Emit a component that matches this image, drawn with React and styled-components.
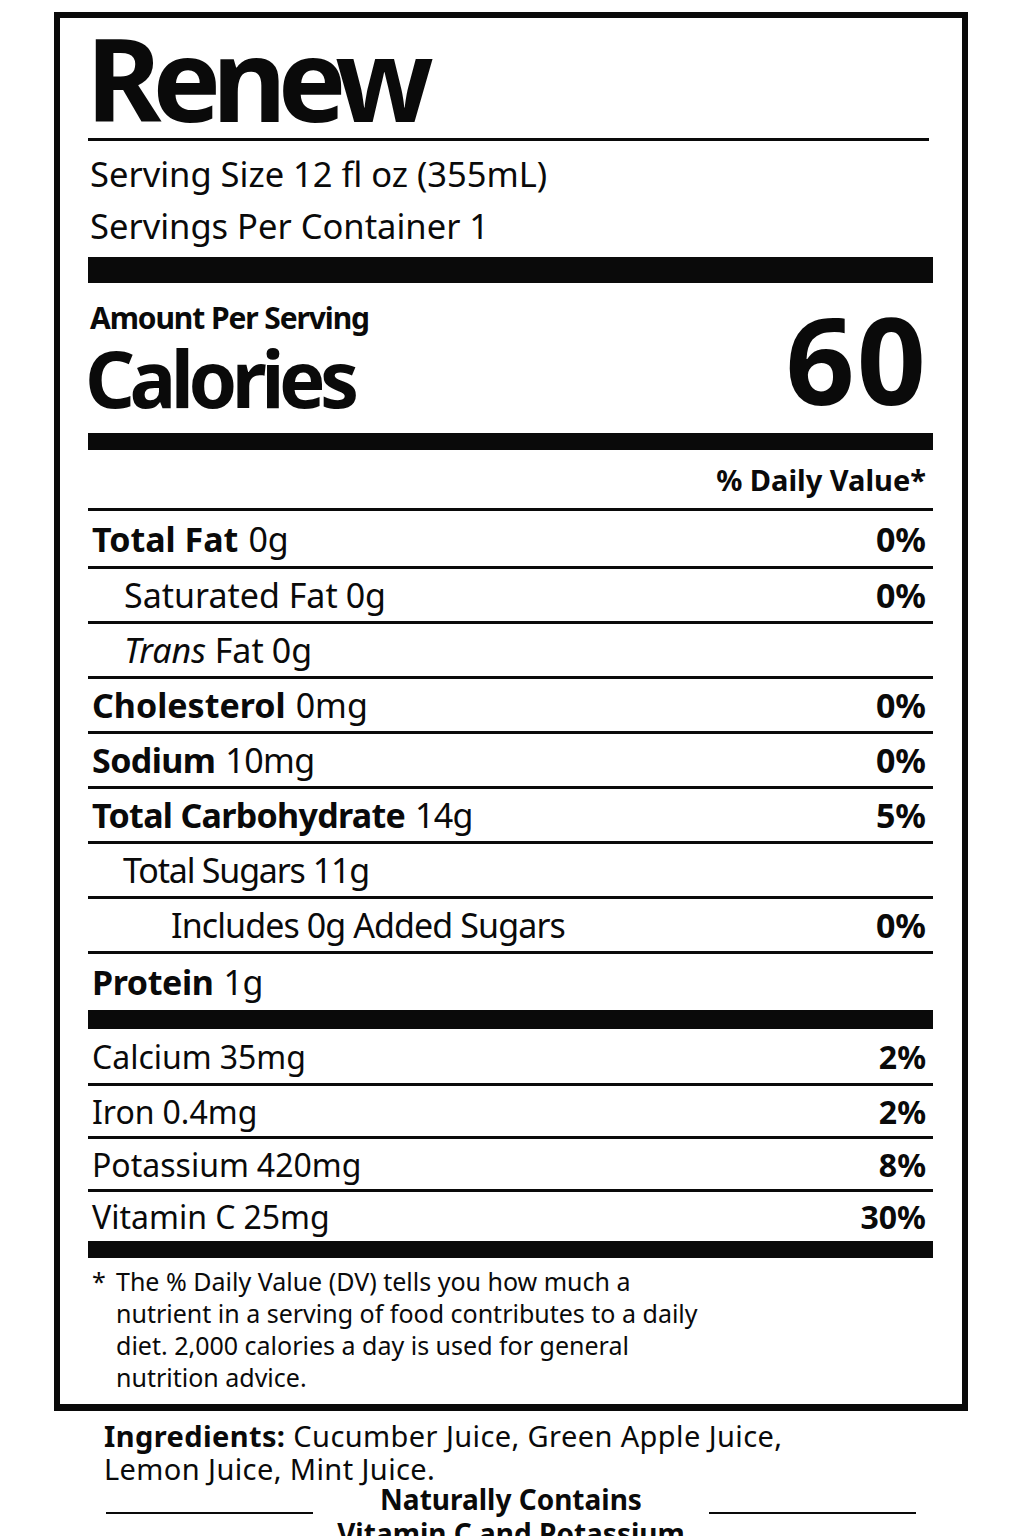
import React from "react";
import styled, { createGlobalStyle } from "styled-components";

const Global = createGlobalStyle`
  html, body { margin: 0; padding: 0; background: #fff; }
  body { font-family: "Noto Sans", "Open Sans", sans-serif; color: #0a0a0a; }
`;

const Page = styled.div`
  width: 1024px;
  height: 1536px;
  overflow: hidden;
  padding-top: 12px;
  box-sizing: border-box;
`;

const Label = styled.section`
  margin-left: 54px;
  width: 914px;
  box-sizing: border-box;
  border: 6px solid #0a0a0a;
  border-bottom-width: 7px;
  padding: 0 29px 0 28px;
`;

const Title = styled.h1`
  margin: 0;
  height: 120px;
  font-size: 115px;
  line-height: 120px;
  font-weight: 700;
  letter-spacing: -9px;
  margin-left: -2px;
`;

const Rule = styled.div`
  height: ${(p) => p.$h || 3}px;
  background: #0a0a0a;
  margin-right: ${(p) => p.$inset || 0}px;
`;

const Serving = styled.div`
  padding: 7px 0 5px 2px;
  font-size: 34.5px;
  line-height: 52px;
`;

const CalorieBlock = styled.div`
  display: flex;
  justify-content: space-between;
  align-items: flex-start;
  padding: 15px 5px 14px 0;
`;

const CalLeft = styled.div`
  display: flex;
  flex-direction: column;
`;

const AmountLabel = styled.div`
  font-size: 30px;
  font-weight: 700;
  line-height: 40px;
  letter-spacing: -1.1px;
  padding-left: 2px;
`;

const CaloriesWord = styled.div`
  font-size: 78px;
  font-weight: 700;
  line-height: 81px;
  letter-spacing: -5.5px;
  margin-left: -3px;
`;

const CaloriesNum = styled.div`
  font-size: 121px;
  font-weight: 700;
  line-height: 121px;
  letter-spacing: 2px;
`;

const DVHeader = styled.div`
  height: 58px;
  display: flex;
  align-items: center;
  justify-content: flex-end;
  padding-right: 7px;
  font-size: 29px;
  font-weight: 700;
  border-bottom: 3px solid #0a0a0a;
`;

const Rows = styled.div`
  display: flex;
  flex-direction: column;
`;

const Row = styled.div`
  display: flex;
  align-items: center;
  justify-content: space-between;
  height: ${(p) => p.$h || 52}px;
  border-top: ${(p) => (p.$first ? 0 : 3)}px solid #0a0a0a;
  padding: 0 7px 0 ${(p) => 4 + (p.$indent || 0)}px;
  font-size: ${(p) => p.$fs || 34}px;
`;

const Entry = styled.span`
  letter-spacing: ${(p) => p.$ls || 0}px;
`;

const Name = styled.span`
  font-weight: ${(p) => (p.$bold ? 700 : 400)};
  margin-right: ${(p) => (p.$bold ? 10 : 8)}px;
`;

const Amt = styled.span``;

const Pct = styled.span`
  font-weight: 700;
`;

const Footnote = styled.p`
  margin: 0;
  padding: 7px 0 11px 28px;
  text-indent: -24px;
  font-size: 25px;
  line-height: 32px;
`;

const Star = styled.span`
  display: inline-block;
  width: 24px;
  text-indent: 0;
`;

const Ingredients = styled.p`
  margin: 8px 0 0 104px;
  width: 720px;
  font-size: 29px;
  line-height: 33px;
  letter-spacing: 0.4px;
`;

const Bold = styled.b`
  font-weight: 700;
`;

const Contains = styled.div`
  display: grid;
  grid-template-columns: 207px 1fr 207px;
  width: 810px;
  margin-left: 106px;
  margin-top: -3px;
  font-size: 28px;
  font-weight: 700;
  line-height: 34px;
  text-align: center;
`;

const SideLine = styled.div`
  align-self: start;
  margin-top: 30px;
  height: 2px;
  background: #0a0a0a;
`;

const nutrients = [
  { name: "Total Fat", amt: "0g", dv: "0%", bold: true, h: 55 },
  { name: "Saturated Fat", amt: "0g", dv: "0%", indent: 32 },
  { name: <><i>Trans</i> Fat</>, amt: "0g", indent: 32 },
  { name: "Cholesterol", amt: "0mg", dv: "0%", bold: true },
  { name: "Sodium", amt: "10mg", dv: "0%", bold: true, ls: -0.6 },
  { name: "Total Carbohydrate", amt: "14g", dv: "5%", bold: true, ls: -0.7 },
  { name: "Total Sugars", amt: "11g", indent: 31, ls: -1.2 },
  { name: "Includes 0g Added Sugars", amt: "", dv: "0%", indent: 79, ls: -0.9 },
  { name: "Protein", amt: "1g", bold: true, h: 56, ls: -0.4 },
];

const vitamins = [
  { name: "Calcium", amt: "35mg", dv: "2%", h: 54 },
  { name: "Iron", amt: "0.4mg", dv: "2%", h: 50 },
  { name: "Potassium", amt: "420mg", dv: "8%", h: 50 },
  { name: "Vitamin C", amt: "25mg", dv: "30%", h: 49 },
];

export default function App() {
  return (
    <Page>
      <Global />
      <Label>
        <Title>Renew</Title>
        <Rule $h={3} $inset={4} />
        <Serving>
          <div>Serving Size 12 fl oz (355mL)</div>
          <div>Servings Per Container 1</div>
        </Serving>
        <Rule $h={26} />
        <CalorieBlock>
          <CalLeft>
            <AmountLabel>Amount Per Serving</AmountLabel>
            <CaloriesWord>Calories</CaloriesWord>
          </CalLeft>
          <CaloriesNum>60</CaloriesNum>
        </CalorieBlock>
        <Rule $h={17} />
        <DVHeader>% Daily Value*</DVHeader>
        <Rows>
          {nutrients.map((n, i) => (
            <Row key={i} $first={i === 0} $h={n.h} $indent={n.indent}>
              <Entry $ls={n.ls}>
                <Name $bold={n.bold}>{n.name}</Name>
                {n.amt && <Amt>{n.amt}</Amt>}
              </Entry>
              {n.dv && <Pct>{n.dv}</Pct>}
            </Row>
          ))}
        </Rows>
        <Rule $h={19} />
        <Rows>
          {vitamins.map((n, i) => (
            <Row key={i} $first={i === 0} $h={n.h} $fs={32}>
              <Entry>
                <Name>{n.name}</Name>
                <Amt>{n.amt}</Amt>
              </Entry>
              <Pct>{n.dv}</Pct>
            </Row>
          ))}
        </Rows>
        <Rule $h={17} />
        <Footnote>
          <Star>*</Star>The % Daily Value (DV) tells you how much a
          <br />
          nutrient in a serving of food contributes to a daily
          <br />
          diet. 2,000 calories a day is used for general
          <br />
          nutrition advice.
        </Footnote>
      </Label>
      <Ingredients>
        <Bold>Ingredients:</Bold> Cucumber Juice, Green Apple Juice,
        <br />
        Lemon Juice, Mint Juice.
      </Ingredients>
      <Contains>
        <SideLine />
        <div>
          Naturally Contains
          <br />
          Vitamin C and Potassium
        </div>
        <SideLine />
      </Contains>
    </Page>
  );
}
